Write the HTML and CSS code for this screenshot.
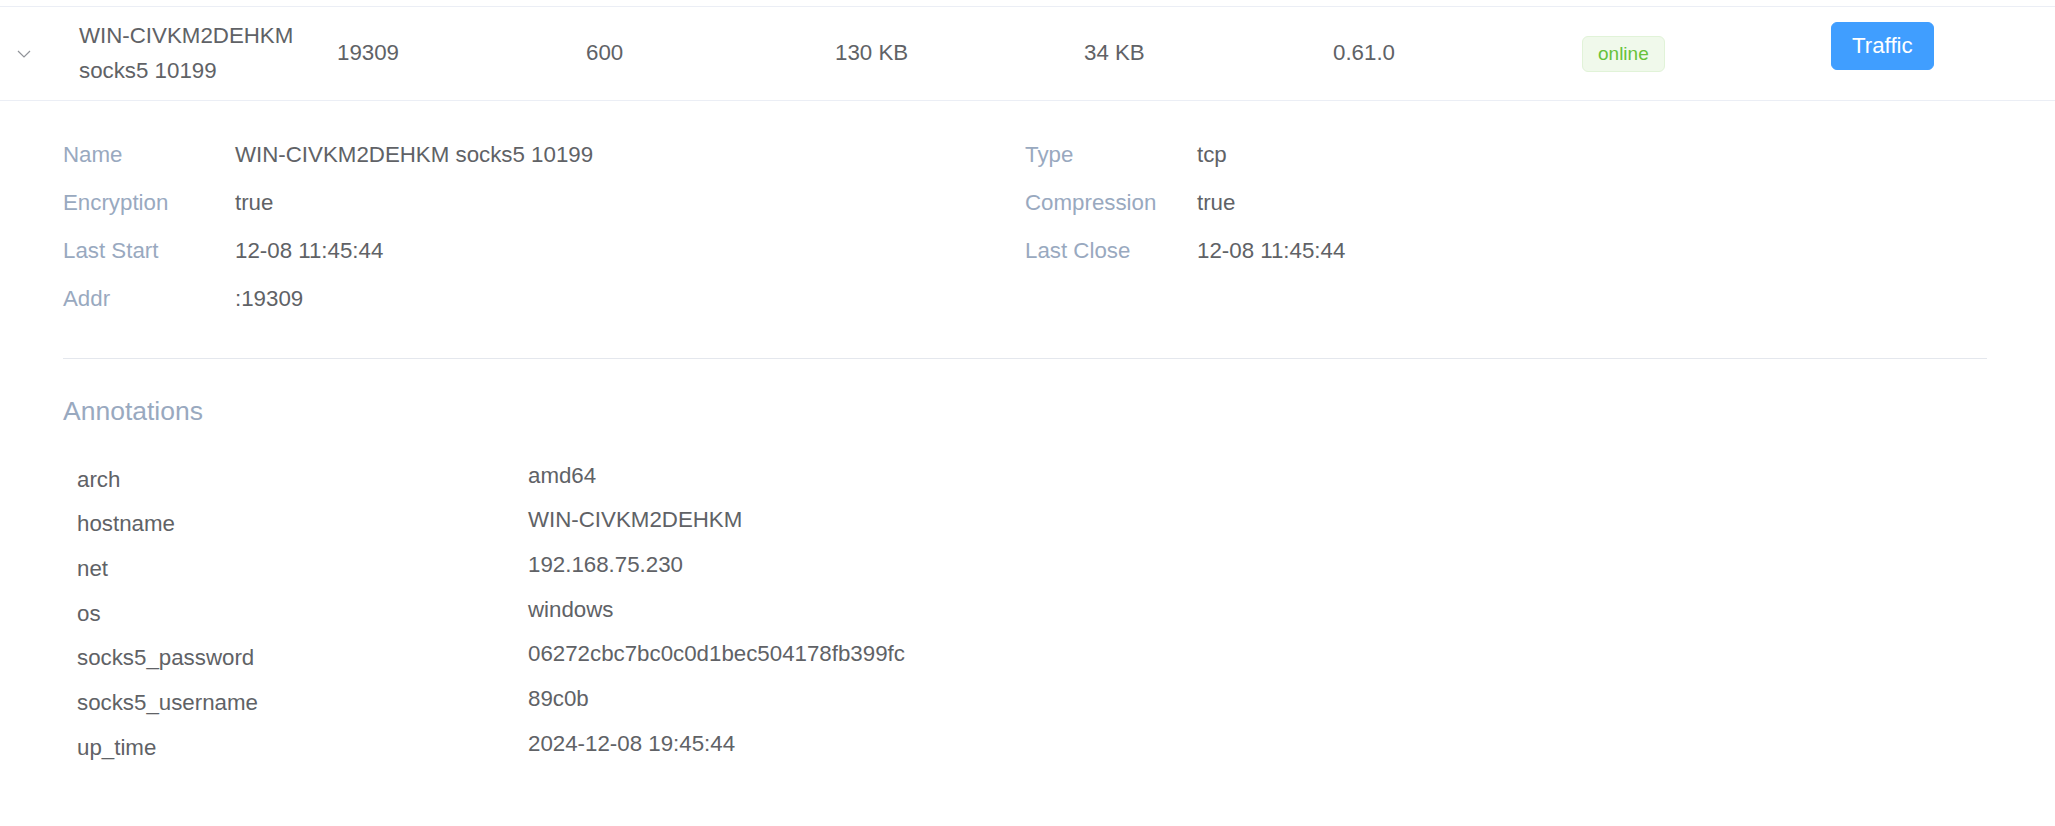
FILE: index.html
```html
<!DOCTYPE html>
<html>
<head>
<meta charset="utf-8">
<link rel="stylesheet" href="styles.css">
</head>
<body>
<div class="table">
  <div class="row">
    <div class="cell expand">
      <svg class="chevron" width="14" height="8" viewBox="0 0 14 8"><path d="M1 1 L7 7 L13 1" fill="none" stroke="#909399" stroke-width="1.2"/></svg>
    </div>
    <div class="cell name">WIN-CIVKM2DEHKM socks5 10199</div>
    <div class="cell">19309</div>
    <div class="cell">600</div>
    <div class="cell">130 KB</div>
    <div class="cell">34 KB</div>
    <div class="cell">0.61.0</div>
    <div class="cell"><span class="tag">online</span></div>
    <div class="cell btn-cell"><button class="btn">Traffic</button></div>
  </div>
  <div class="expanded">
    <div class="form">
      <div class="item"><span class="label">Name</span><span class="value">WIN-CIVKM2DEHKM socks5 10199</span></div>
      <div class="item"><span class="label">Type</span><span class="value">tcp</span></div>
      <div class="item"><span class="label">Encryption</span><span class="value">true</span></div>
      <div class="item"><span class="label">Compression</span><span class="value">true</span></div>
      <div class="item"><span class="label">Last Start</span><span class="value">12-08 11:45:44</span></div>
      <div class="item"><span class="label">Last Close</span><span class="value">12-08 11:45:44</span></div>
      <div class="item"><span class="label">Addr</span><span class="value">:19309</span></div>
      <div class="item"></div>
    </div>
    <div class="divider"></div>
    <div class="ann-title">Annotations</div>
    <div class="ann">
      <div class="key">arch</div><div class="val">amd64</div>
      <div class="key">hostname</div><div class="val">WIN-CIVKM2DEHKM</div>
      <div class="key">net</div><div class="val">192.168.75.230</div>
      <div class="key">os</div><div class="val">windows</div>
      <div class="key">socks5_password</div><div class="val">06272cbc7bc0c0d1bec504178fb399fc</div>
      <div class="key">socks5_username</div><div class="val">89c0b</div>
      <div class="key">up_time</div><div class="val">2024-12-08 19:45:44</div>
    </div>
  </div>
</div>
</body>
</html>
```
FILE: styles.css
```css
html, body {
  margin: 0;
  padding: 0;
  background: #ffffff;
}
body {
  font-family: "Liberation Sans", Arial, sans-serif;
  font-size: 22.3px;
  color: #606266;
}
.table {
  margin-top: 6px;
}
.row {
  display: grid;
  grid-template-columns: 66px 258px repeat(6, 249px) 1fr;
  align-items: center;
  border-top: 1px solid #ebeef5;
  border-bottom: 1px solid #ebeef5;
}
.cell {
  padding: 12px 13px;
  line-height: 34.5px;
  box-sizing: border-box;
}
.cell.expand {
  padding-left: 17px;
  display: flex;
  align-items: center;
}
.chevron {
  display: block;
}
.tag {
  display: inline-block;
  height: 36px;
  line-height: 34px;
  padding: 0 15px;
  box-sizing: border-box;
  font-size: 19px;
  color: #67c23a;
  background: #f0f9eb;
  border: 1px solid #e1f3d8;
  border-radius: 6px;
  vertical-align: middle;
}
.btn-cell {
  align-self: start;
  padding-top: 15px;
}
.btn {
  height: 48px;
  padding: 0 20px;
  font-family: "Liberation Sans", Arial, sans-serif;
  font-size: 22.3px;
  color: #ffffff;
  background: #409eff;
  border: 1px solid #409eff;
  border-radius: 6px;
  display: block;
}
.expanded {
  padding: 30px 68px 40px 63px;
}
.form {
  display: grid;
  grid-template-columns: 1fr 1fr;
}
.item {
  display: flex;
  height: 48px;
  line-height: 48px;
}
.label {
  width: 172px;
  flex: none;
  color: #99a9bf;
}
.value {
  color: #606266;
}
.divider {
  height: 1px;
  background: #e4e7ed;
  margin-top: 35px;
}
.ann-title {
  margin-top: 34px;
  font-size: 26.5px;
  line-height: 36px;
  color: #99a9bf;
}
.ann {
  display: grid;
  grid-template-columns: 465px 1fr;
  margin-top: 26.6px;
}
.key {
  padding-left: 14px;
  padding-top: 4px;
  line-height: 40.7px;
  color: #606266;
}
.val {
  line-height: 40.7px;
  color: #606266;
}
```
